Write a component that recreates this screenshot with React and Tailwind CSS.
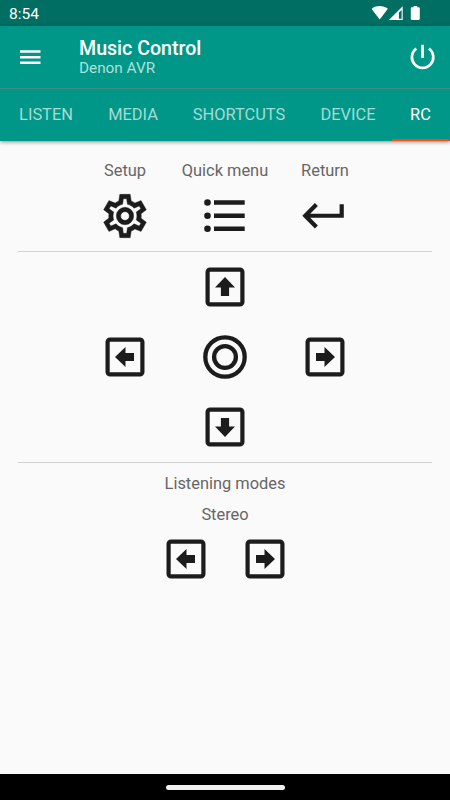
import React from 'react';

const TABS = [
  { label: 'LISTEN', width: 'w-[92px]' },
  { label: 'MEDIA', width: 'w-[82px]' },
  { label: 'SHORTCUTS', width: 'w-[130px]' },
  { label: 'DEVICE', width: 'w-[88px]' },
  { label: 'RC', width: 'w-[57px]', active: true },
];

const ROTATION = {
  up: 'rotate-0',
  right: 'rotate-90',
  down: 'rotate-180',
  left: '-rotate-90',
};

const StatusIcons = () => (
  <svg className="w-[50px] h-[16px]" viewBox="0 0 50 16" fill="#fff">
    <path d="M-.5 3.800C1.800 1.900 5 1 7.700 1s5.900.9 8.200 2.800L7.700 14.500z" />
    <path fillRule="evenodd" d="M30.700 1.200V15H16.900zM29.600 5v8.800h-2.700V7.600z" />
    <path d="M40 2.200h1.600V1h3.600v1.200h1.400c.7 0 1.200.5 1.200 1.200v10.400c0 .7-.5 1.200-1.200 1.200H40c-.7 0-1.200-.5-1.200-1.200V3.400c0-.7.5-1.200 1.200-1.200z" />
  </svg>
);

const MenuIcon = () => (
  <svg className="w-[21px] h-[15px]" viewBox="0 0 21 15" fill="#fff">
    <path d="M0 .3h20.500v2.400H0zM0 6h20.500v2.400H0zM0 11.600h20.500V14H0z" />
  </svg>
);

const PowerIcon = () => (
  <svg className="w-[26px] h-[26px]" viewBox="0 0 26 26" fill="none" stroke="#fff" strokeWidth="2.7">
    <path d="M12.600 .8v13.200M6.300 4.600A10.700 10.700 0 1 0 18.900 4.600" />
  </svg>
);

const GearIcon = () => (
  <svg className="block w-[52px] h-[52px]" viewBox="0 0 24 24" fill="#1c1c1c" stroke="#1c1c1c" strokeWidth=".2">
    <path d="M12,8A4,4 0 0,1 16,12A4,4 0 0,1 12,16A4,4 0 0,1 8,12A4,4 0 0,1 12,8M12,10A2,2 0 0,0 10,12A2,2 0 0,0 12,14A2,2 0 0,0 14,12A2,2 0 0,0 12,10M9.600,22L9.13,18.93C8.5,18.68 7.96,18.34 7.44,17.94L4.600,19.100L2.150,14.870L4.57,12.97L4.5,12L4.57,11L2.150,9.130L4.600,4.900L7.44,6.05C7.96,5.66 8.5,5.32 9.13,5.07L9.600,2H14.400L14.87,5.07C15.5,5.32 16.04,5.66 16.56,6.05L19.400,4.900L21.850,9.130L19.43,11L19.5,12L19.43,13L21.850,14.870L19.400,19.100L16.56,17.95C16.04,18.34 15.5,18.68 14.87,18.93L14.400,22H9.600M11.25,4L10.88,6.61C9.68,6.86 8.62,7.5 7.85,8.39L5.44,7.35L4.69,8.65L6.8,10.2C6.4,11.37 6.4,12.64 6.8,13.8L4.68,15.36L5.43,16.66L7.86,15.62C8.63,16.5 9.68,17.14 10.87,17.38L11.24,20.01H12.76L13.13,17.39C14.32,17.14 15.37,16.5 16.14,15.62L18.57,16.66L19.32,15.36L17.2,13.81C17.6,12.64 17.6,11.37 17.2,10.2L19.31,8.65L18.56,7.35L16.15,8.39C15.38,7.5 14.32,6.86 13.12,6.62L12.75,4H11.25Z" />
  </svg>
);

const ListIcon = () => (
  <svg className="block w-[52px] h-[52px]" viewBox="0 0 52 52" fill="#1c1c1c">
    <circle cx="8.500" cy="12.500" r="3.300" />
    <circle cx="8.500" cy="25.700" r="3.300" />
    <circle cx="8.500" cy="38.800" r="3.300" />
    <path d="M15 10.300h30.700v4.400H15zM15 23.500h30.700v4.400H15zM15 36.600h30.700v4.400H15z" />
  </svg>
);

const ReturnIcon = () => (
  <svg className="block w-[52px] h-[52px]" viewBox="0 0 52 52" fill="#1c1c1c">
    <path d="M40.600 14.300h4.200v13.500H11.200l7.700 7.700-3 3L3.300 25.700 15.900 13l3 3-7.700 7.700h29.400z" />
  </svg>
);

const ArrowButton = ({ dir }) => (
  <button className="block w-[40px] h-[40px]">
    <svg className={`block w-[40px] h-[40px] ${ROTATION[dir]}`} viewBox="0 0 40 40">
      <rect x="2.600" y="2.600" width="34.800" height="34.800" rx="2.500" fill="none" stroke="#1c1c1c" strokeWidth="4.200" />
      <path d="M20 10l10 10.500h-5.900V29h-8.200v-8.500H10z" fill="#1c1c1c" />
    </svg>
  </button>
);

const EnterButton = () => (
  <button className="block w-[44px] h-[44px]">
    <svg className="block w-[44px] h-[44px]" viewBox="0 0 44 44" fill="none" stroke="#1c1c1c" strokeWidth="4.300">
      <circle cx="22" cy="22" r="19.700" />
      <circle cx="22" cy="22" r="10.900" />
    </svg>
  </button>
);

const Action = ({ label, children }) => (
  <div className="w-[100px] flex flex-col items-center">
    <span className="h-[20px] leading-[20px] whitespace-nowrap">{label}</span>
    <button className="mt-[9px]">{children}</button>
  </div>
);

const App = () => {
  return (
    <div className="w-[450px] h-[800px] flex flex-col overflow-hidden bg-[#fafafa] text-[#666] text-[16.4px] font-['Roboto',sans-serif]">
      <div className="h-[26px] shrink-0 bg-[#006e63] flex items-center justify-between pl-[9px] pr-[28px] text-white">
        <span className="text-[15.500px] leading-[20px] pt-[2px]">8:54</span>
        <StatusIcons />
      </div>

      <header className="relative z-10 shrink-0 bg-[#009788] shadow-[0_1px_4px_rgba(0,0,0,0.45)]">
        <div className="h-[63px] flex items-center border-b border-[#3f8c83] pl-[20px] pr-[14px]">
          <MenuIcon />
          <div className="flex-1 pl-[38px] pt-[1px]">
            <h1 className="text-[19.6px] leading-[21px] font-medium text-white">Music Control</h1>
            <p className="text-[15.3px] leading-[18px] text-[#b2dfdb]">Denon AVR</p>
          </div>
          <PowerIcon />
        </div>
        <nav className="h-[52px] flex">
          {TABS.map((tab) => (
            <div
              key={tab.label}
              className={`${tab.width} shrink-0 flex items-center justify-center border-b-2 pt-[2px] text-[16.4px] ${tab.active ? 'border-[#ff4a12] text-white' : 'border-transparent text-[#a6dad5]'}`}
            >
              {tab.label}
            </div>
          ))}
        </nav>
      </header>

      <main className="flex-1 px-[18px] pt-[20px]">
        <section className="h-[91px] flex justify-center border-b border-[#d2d2d2]">
          <Action label="Setup"><GearIcon /></Action>
          <Action label="Quick menu"><ListIcon /></Action>
          <Action label="Return"><ReturnIcon /></Action>
        </section>

        <section className="h-[211px] grid grid-cols-[100px_100px_100px] grid-rows-[69px_71px_69px] justify-center place-items-center border-b border-[#d2d2d2]">
          <div className="col-start-2"><ArrowButton dir="up" /></div>
          <div className="col-start-1 row-start-2"><ArrowButton dir="left" /></div>
          <div className="col-start-2 row-start-2"><EnterButton /></div>
          <div className="col-start-3 row-start-2"><ArrowButton dir="right" /></div>
          <div className="col-start-2 row-start-3"><ArrowButton dir="down" /></div>
        </section>

        <section className="flex flex-col items-center pt-[11px]">
          <span className="leading-[20px]">Listening modes</span>
          <span className="leading-[20px] mt-[11px]">Stereo</span>
          <div className="flex gap-[39px] mt-[14px]">
            <ArrowButton dir="left" />
            <ArrowButton dir="right" />
          </div>
        </section>
      </main>

      <footer className="h-[26px] shrink-0 bg-black flex items-center justify-center">
        <div className="w-[119px] h-[5px] rounded-full bg-[#f2f2f2]" />
      </footer>
    </div>
  );
};

export default App;
